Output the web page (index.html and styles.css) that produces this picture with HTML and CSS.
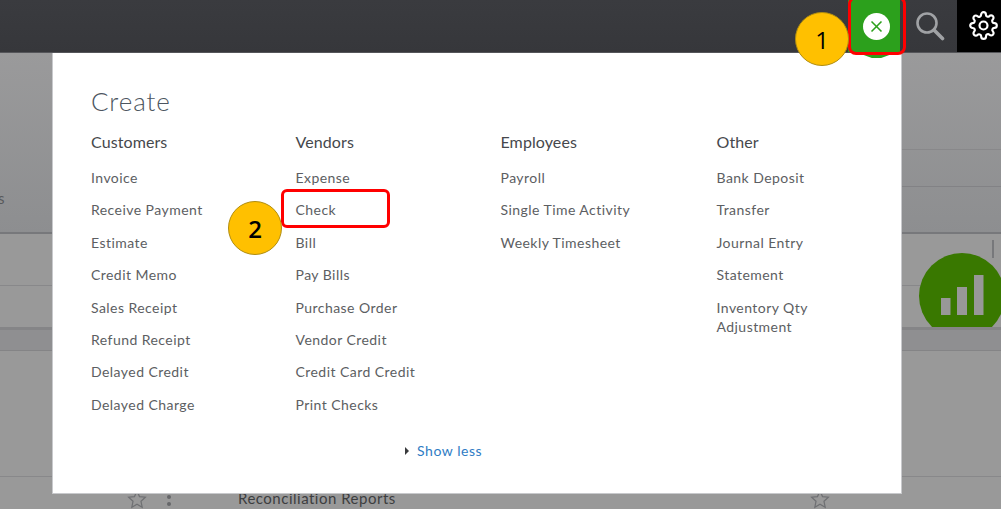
FILE: index.html
```html
<!DOCTYPE html>
<html lang="en">
<head>
<meta charset="utf-8">
<title>Create</title>
<link rel="stylesheet" href="styles.css">
</head>
<body>
<div class="page">
  <header class="topbar">
    <div class="plus-tab">
      <svg class="close-icon" width="27" height="27" viewBox="0 0 26 26"><circle cx="13" cy="13" r="13" fill="#fff"/><path d="M8.2 8.2l9.600 9.600M17.800 8.200l-9.600 9.600" stroke="#2ca01c" stroke-width="1.500" fill="none"/></svg>
    </div>
    <div class="search-tab">
      <svg width="30" height="32" viewBox="0 0 30 32"><circle cx="12" cy="13" r="9.500" fill="none" stroke="#a0a2a5" stroke-width="2.600"/><path d="M19 20l8.500 8.500" stroke="#a0a2a5" stroke-width="3.600" stroke-linecap="round"/></svg>
    </div>
    <div class="gear-tab">
      <svg width="29" height="29" viewBox="0 0 24 24" fill="none" stroke="#fff" stroke-width="1.800" stroke-linejoin="round"><circle cx="12" cy="12" r="3.300"/><path d="M19.400 15a1.650 1.650 0 0 0 .33 1.820l.06.06a2 2 0 0 1 0 2.830 2 2 0 0 1-2.830 0l-.06-.06a1.650 1.650 0 0 0-1.820-.33 1.650 1.650 0 0 0-1 1.510V21a2 2 0 0 1-2 2 2 2 0 0 1-2-2v-.09A1.650 1.650 0 0 0 9 19.400a1.650 1.650 0 0 0-1.820.33l-.06.06a2 2 0 0 1-2.830 0 2 2 0 0 1 0-2.830l.06-.06a1.650 1.650 0 0 0 .33-1.820 1.650 1.650 0 0 0-1.510-1H3a2 2 0 0 1-2-2 2 2 0 0 1 2-2h.09A1.650 1.650 0 0 0 4.600 9a1.650 1.650 0 0 0-.33-1.820l-.06-.06a2 2 0 0 1 0-2.830 2 2 0 0 1 2.830 0l.06.06a1.650 1.650 0 0 0 1.820.33H9a1.650 1.650 0 0 0 1-1.510V3a2 2 0 0 1 2-2 2 2 0 0 1 2 2v.09a1.650 1.650 0 0 0 1 1.510 1.650 1.650 0 0 0 1.820-.33l.06-.06a2 2 0 0 1 2.830 0 2 2 0 0 1 0 2.830l-.06.06a1.650 1.650 0 0 0-.33 1.820V9a1.650 1.650 0 0 0 1.510 1H21a2 2 0 0 1 2 2 2 2 0 0 1-2 2h-.09a1.650 1.650 0 0 0-1.510 1z"/></svg>
    </div>
  </header>

  <main class="backdrop">
    <div class="band band-a"></div>
    <div class="band band-b"></div>
    <div class="band band-c"></div>
    <div class="band band-d"></div>
    <div class="band band-e"></div>
    <div class="band band-f"></div>
    <div class="band band-g"></div>
    <span class="edge-letter">s</span>
    <div class="chart-badge">
      <svg width="82" height="74" viewBox="0 0 82 74"><circle cx="43" cy="43" r="43" fill="#397800"/><path d="M22 62V45h9.500v17zM38 62V34h10v28zM55 62V22h9.500v40z" fill="#989898"/></svg>
    </div>
    <div class="peek-tick"></div>
    <div class="peek-row">
      <svg class="star star-left" width="24" height="20" viewBox="0 0 24 24"><path d="M12 2.500l3 6.600 7 .8-5.200 4.800 1.400 7.100-6.200-3.600-6.200 3.600 1.400-7.100L2 9.900l7-.8z" fill="none" stroke="#6f7073" stroke-width="1.500"/></svg>
      <span class="dots"></span>
      <span class="peek-label">Reconciliation Reports</span>
      <svg class="star star-right" width="24" height="20" viewBox="0 0 24 24"><path d="M12 2.500l3 6.600 7 .8-5.200 4.800 1.400 7.100-6.200-3.600-6.200 3.600 1.400-7.100L2 9.900l7-.8z" fill="none" stroke="#6f7073" stroke-width="1.500"/></svg>
    </div>
  </main>

  <section class="modal">
    <h1 class="title">Create</h1>
    <div class="columns">
      <div class="col col-1">
        <h2>Customers</h2>
        <ul>
          <li>Invoice</li><li>Receive Payment</li><li>Estimate</li><li>Credit Memo</li><li>Sales Receipt</li><li>Refund Receipt</li><li>Delayed Credit</li><li>Delayed Charge</li>
        </ul>
      </div>
      <div class="col col-2">
        <h2>Vendors</h2>
        <ul>
          <li>Expense</li><li>Check</li><li>Bill</li><li>Pay Bills</li><li>Purchase Order</li><li>Vendor Credit</li><li>Credit Card Credit</li><li>Print Checks</li>
        </ul>
      </div>
      <div class="col col-3">
        <h2>Employees</h2>
        <ul>
          <li>Payroll</li><li>Single Time Activity</li><li>Weekly Timesheet</li>
        </ul>
      </div>
      <div class="col col-4">
        <h2>Other</h2>
        <ul>
          <li>Bank Deposit</li><li>Transfer</li><li>Journal Entry</li><li>Statement</li><li class="wrap">Inventory Qty Adjustment</li>
        </ul>
      </div>
    </div>
    <div class="show-less"><span class="caret"></span><span class="show-text">Show less</span></div>
  </section>

  <div class="green-peek"></div>
  <div class="callout-box box-plus"></div>
  <div class="callout-box box-check"></div>
  <div class="badge badge-1">1</div>
  <div class="badge badge-2">2</div>
</div>
</body>
</html>
```
FILE: styles.css
```css
* { box-sizing: border-box; }
html, body { margin: 0; padding: 0; }
body { width: 1001px; height: 509px; overflow: hidden; font-family: "Lato", "Open Sans", sans-serif; background: #989898; }
.page { position: relative; width: 1001px; height: 509px; overflow: hidden; display: flex; flex-direction: column; }

.topbar { height: 53px; flex: none; display: flex; justify-content: flex-end; background: linear-gradient(#3a3b3f, #36373b); border-bottom: 1px solid #55565a; }
.plus-tab { width: 52px; margin-right: 2px; padding-left: 4px; display: flex; align-items: center; justify-content: center; background: #2ca01c; }
.search-tab { width: 55px; display: flex; align-items: center; justify-content: center; padding-bottom: 1px; }
.gear-tab { width: 44px; display: flex; align-items: center; justify-content: center; background: #000; padding: 0 0 1px 9px; }

.backdrop { position: relative; flex: 1; background: linear-gradient(#9a9a9b 0, #8d8e90 180px, #999 180px); display: flex; flex-direction: column; }
.band { flex: none; }
.band-a { height: 97px; background: linear-gradient(#88888a, #88888a) right bottom / 100px 1px no-repeat; }
.band-b { height: 37px; background: linear-gradient(#828285, #828285) right bottom / 100px 1px no-repeat; }
.band-c { height: 47px; border-bottom: 2px solid #77787b; }
.band-d { height: 52px; border-bottom: 1px solid #88888a; }
.band-e { height: 41px; }
.band-f { height: 24px; background: #8f8f91; border-top: 3px solid #858587; border-bottom: 1px solid #848486; }
.band-g { height: 126px; border-bottom: 1px solid #88888a; }
.edge-letter { position: absolute; left: -2px; top: 136px; font-size: 15px; color: #58595b; }
.chart-badge { position: absolute; left: 919px; top: 200px; width: 82px; height: 74px; overflow: hidden; }
.peek-tick { position: absolute; left: 992px; top: 187px; width: 2px; height: 18px; background: #77787b; }
.peek-row { position: absolute; left: 0; top: 431px; width: 1001px; height: 25px; }
.star { position: absolute; top: 5px; }
.star-left { left: 125px; }
.star-right { left: 808px; }
.dots { position: absolute; left: 167px; top: 11px; width: 4px; height: 4px; border-radius: 50%; background: #66676a; box-shadow: 0 7px 0 #66676a; }
.peek-label { position: absolute; left: 238px; top: 5px; font-size: 15px; color: #3d3e40; letter-spacing: .5px; }

.modal { position: absolute; left: 53px; top: 53px; width: 848px; height: 440px; background: #fff; padding: 32px 0 0 38px; box-shadow: 0 0 0 1px #c8c9cc; clip-path: inset(0 -1px -1px -1px); }
.title { margin: 0; font-size: 26px; line-height: 32px; font-weight: 300; color: #4c5560; letter-spacing: .9px; }
.columns { display: grid; grid-template-columns: 204.500px 205px 216px 170px; margin-top: 14px; }
.col h2 { margin: 0 0 15px; font-size: 16px; line-height: 22px; font-weight: 400; color: #46484c; letter-spacing: .1px; }
.col ul { margin: 0; padding: 0; list-style: none; }
.col li { font-size: 14px; line-height: 19px; height: 32.400px; color: #5c5e62; letter-spacing: .45px; }
.col li.wrap { width: 120px; height: auto; }
.show-less { position: absolute; left: 352px; top: 388px; display: flex; align-items: center; gap: 8px; }
.caret { width: 0; height: 0; border-left: 4px solid #393a3d; border-top: 4.500px solid transparent; border-bottom: 4.500px solid transparent; }
.show-text { font-size: 14px; line-height: 20px; color: #2f7cc4; letter-spacing: .55px; }

.green-peek { position: absolute; left: 861px; top: 54px; width: 31px; height: 4px; background: #2ca01c; clip-path: polygon(0 0, 100% 0, 65% 100%, 35% 100%); }
.callout-box { position: absolute; border: 3px solid #f00; border-radius: 6px; }
.box-plus { left: 848px; top: -4px; width: 58px; height: 59px; border-width: 3.500px; border-radius: 8px; }
.box-check { left: 281px; top: 189px; width: 109px; height: 39px; }
.badge { position: absolute; width: 54px; height: 54px; border-radius: 50%; background: #ffc000; border: 1px solid #b08d10; display: flex; align-items: center; justify-content: center; font-family: "Open Sans", sans-serif; font-size: 24px; color: #000; }
.badge-1 { left: 795px; top: 12px; }
.badge-2 { left: 228px; top: 201px; font-weight: 600; }
```
